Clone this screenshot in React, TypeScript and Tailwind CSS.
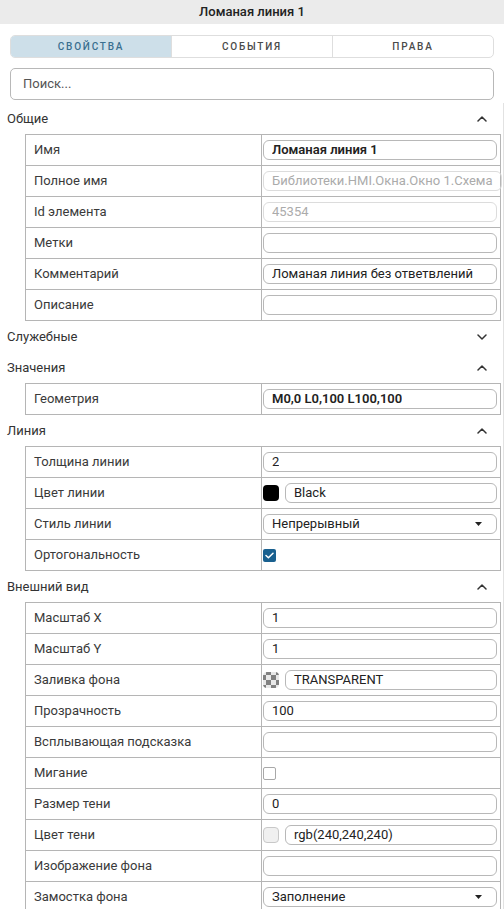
import { ReactNode } from "react";

type Row = {
  label: string;
  kind: "text" | "color" | "select" | "check";
  value?: string;
  bold?: boolean;
  disabled?: boolean;
  swatch?: "black" | "checker" | "light";
  checked?: boolean;
};

type Section = { title: string; open: boolean; rows: Row[] };

const sections: Section[] = [
  {
    title: "Общие",
    open: true,
    rows: [
      { label: "Имя", kind: "text", value: "Ломаная линия 1", bold: true },
      { label: "Полное имя", kind: "text", value: "Библиотеки.HMI.Окна.Окно 1.Схема", disabled: true },
      { label: "Id элемента", kind: "text", value: "45354", disabled: true },
      { label: "Метки", kind: "text", value: "" },
      { label: "Комментарий", kind: "text", value: "Ломаная линия без ответвлений" },
      { label: "Описание", kind: "text", value: "" },
    ],
  },
  { title: "Служебные", open: false, rows: [] },
  {
    title: "Значения",
    open: true,
    rows: [{ label: "Геометрия", kind: "text", value: "M0,0 L0,100 L100,100", bold: true }],
  },
  {
    title: "Линия",
    open: true,
    rows: [
      { label: "Толщина линии", kind: "text", value: "2" },
      { label: "Цвет линии", kind: "color", value: "Black", swatch: "black" },
      { label: "Стиль линии", kind: "select", value: "Непрерывный" },
      { label: "Ортогональность", kind: "check", checked: true },
    ],
  },
  {
    title: "Внешний вид",
    open: true,
    rows: [
      { label: "Масштаб X", kind: "text", value: "1" },
      { label: "Масштаб Y", kind: "text", value: "1" },
      { label: "Заливка фона", kind: "color", value: "TRANSPARENT", swatch: "checker" },
      { label: "Прозрачность", kind: "text", value: "100" },
      { label: "Всплывающая подсказка", kind: "text", value: "" },
      { label: "Мигание", kind: "check", checked: false },
      { label: "Размер тени", kind: "text", value: "0" },
      { label: "Цвет тени", kind: "color", value: "rgb(240,240,240)", swatch: "light" },
      { label: "Изображение фона", kind: "text", value: "" },
      { label: "Замостка фона", kind: "select", value: "Заполнение" },
    ],
  },
];

const Chevron = ({ up }: { up: boolean }) => (
  <svg width="10" height="6" viewBox="0 0 10 6" fill="none">
    <path
      d={up ? "M1 5 L5 1 L9 5" : "M1 1 L5 5 L9 1"}
      stroke="#333"
      strokeWidth="1.5"
      strokeLinecap="round"
      strokeLinejoin="round"
    />
  </svg>
);

const Field = ({ children, muted }: { children: ReactNode; muted?: boolean }) => (
  <div
    className={`flex h-[20px] flex-1 items-center rounded-[6px] border px-2 ${
      muted ? "border-[#dcdcdc]" : "border-[#b8b8b8]"
    }`}
  >
    {children}
  </div>
);

const Swatch = ({ type }: { type: "black" | "checker" | "light" }) => {
  if (type === "black") return <div className="h-[16px] w-[16px] shrink-0 rounded-[4px] bg-black" />;
  if (type === "light")
    return <div className="h-[16px] w-[16px] shrink-0 rounded-[4px] border border-[#c8c8c8] bg-[#f0f0f0]" />;
  // transparent fill: checkerboard
  return (
    <div className="h-[16px] w-[16px] shrink-0 overflow-hidden rounded-[4px] bg-[repeating-conic-gradient(#808080_0%_25%,#e8e8e8_0%_50%)] bg-[length:10px_10px] bg-[position:-2px_-2px]" />
  );
};

const Value = ({ row }: { row: Row }) => {
  if (row.kind === "check") {
    return row.checked ? (
      <div className="flex h-[13px] w-[13px] items-center justify-center rounded-[2px] bg-[#19608f]">
        <svg width="9" height="7" viewBox="0 0 9 7" fill="none">
          <path d="M1 3.5 L3.4 5.8 L8 1.2" stroke="white" strokeWidth="1.5" strokeLinecap="round" strokeLinejoin="round" />
        </svg>
      </div>
    ) : (
      <div className="h-[13px] w-[13px] rounded-[2px] border border-[#a8a8a8] bg-white" />
    );
  }
  if (row.kind === "color") {
    return (
      <div className="flex flex-1 items-center gap-[6px]">
        <Swatch type={row.swatch!} />
        <Field>
          <span className="text-[13px] text-[#222]">{row.value}</span>
        </Field>
      </div>
    );
  }
  if (row.kind === "select") {
    return (
      <Field>
        <span className="flex-1 text-[13px] text-[#222]">{row.value}</span>
        <svg width="7" height="4" viewBox="0 0 7 4" className="mr-[6px]">
          <path d="M0 0 L7 0 L3.5 4 Z" fill="#222" />
        </svg>
      </Field>
    );
  }
  return (
    <Field muted={row.disabled}>
      <span
        className={`truncate text-[13px] ${row.bold ? "font-semibold text-[#111]" : ""} ${
          row.disabled ? "text-[#ababab]" : "text-[#222]"
        }`}
      >
        {row.value}
      </span>
    </Field>
  );
};

const PropSection = ({ section }: { section: Section }) => (
  <div>
    <div className="flex h-[31px] items-center justify-between pl-[7px] pr-[16px]">
      <span className="text-[13px] text-[#333]">{section.title}</span>
      <Chevron up={section.open} />
    </div>
    {section.open && section.rows.length > 0 && (
      <div className="ml-[25px] mr-[2px] border-t border-l border-r border-[#b5b5b5]">
        {section.rows.map((row) => (
          <div key={row.label} className="flex h-[31px] border-b border-[#b5b5b5]">
            <div className="flex w-[236px] shrink-0 items-center border-r border-[#b5b5b5] pl-[8px] text-[13px] text-[#3a3a3a]">
              {row.label}
            </div>
            <div className="flex flex-1 items-center pl-[1px] pr-[3px]">
              <Value row={row} />
            </div>
          </div>
        ))}
      </div>
    )}
  </div>
);

export default function App() {
  const tabs = ["Свойства", "События", "Права"];
  return (
    <div className="h-[909px] w-[504px] overflow-hidden bg-white font-['Roboto',sans-serif]">
      <div className="flex h-[24px] items-center justify-center bg-[#ebebeb] text-[13px] font-medium text-[#222]">
        Ломаная линия 1
      </div>

      <div className="mx-[10px] mt-[11px] flex h-[23px] overflow-hidden rounded-[5px] border border-[#dedede]">
        {tabs.map((t, i) => (
          <div
            key={t}
            className={`flex flex-1 items-center justify-center text-[10px] font-medium uppercase tracking-[1.8px] ${
              i === 0 ? "bg-[#cddfe9] text-[#3a6f90]" : "text-[#4a4a4a]"
            } ${i > 0 ? "border-l border-[#dedede]" : ""}`}
          >
            {t}
          </div>
        ))}
      </div>

      <div className="mx-[10px] mt-[10px] flex h-[32px] items-center rounded-[5px] border border-[#b8b8b8] px-[12px]">
        <span className="text-[13px] text-[#555]">Поиск...</span>
      </div>

      <div className="mt-[3px] border-r border-[#e2e2e2]">
        {sections.map((s) => (
          <PropSection key={s.title} section={s} />
        ))}
      </div>
    </div>
  );
}
